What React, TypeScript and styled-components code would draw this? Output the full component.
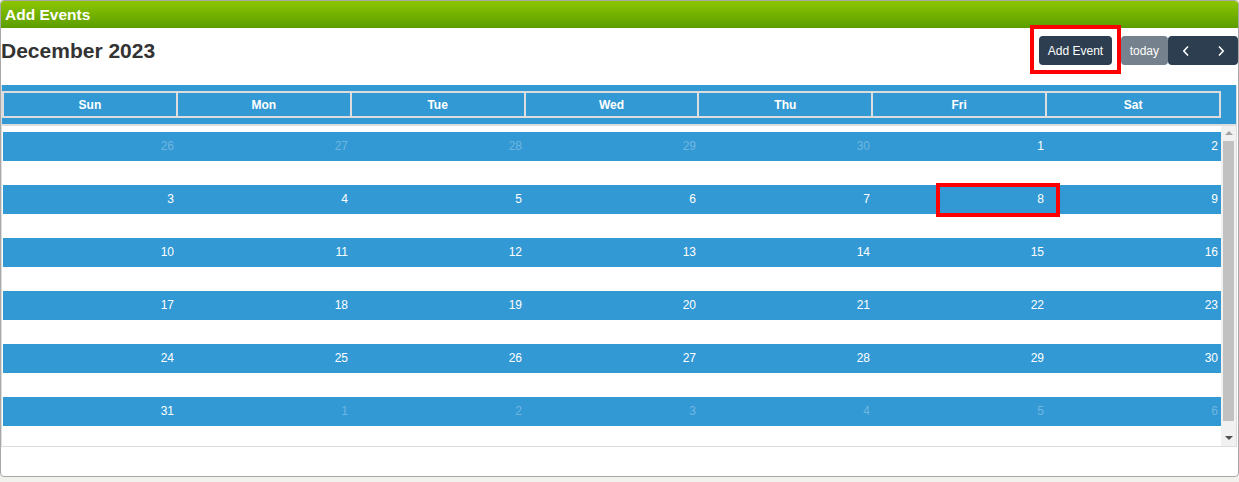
import React, { FC } from "react";
import styled, { createGlobalStyle, css } from "styled-components";

const GlobalStyle = createGlobalStyle`
  html, body {
    margin: 0;
    padding: 0;
    background: #f3f1ed;
    font-family: "Liberation Sans", Arial, sans-serif;
  }
  * {
    box-sizing: border-box;
  }
`;

const BLUE = "#3399d4";
const DARK = "#2c3e50";

const Panel = styled.div`
  width: 1239px;
  height: 477px;
  border: 1px solid #a8a8a8;
  border-radius: 4px;
  background: #fff;
  overflow: hidden;
  display: flex;
  flex-direction: column;
`;

const PanelHeader = styled.div`
  height: 27px;
  padding-left: 4px;
  display: flex;
  align-items: center;
  background: linear-gradient(#8cc600, #5b9d00);
  border-top-right-radius: 3px;
  color: #fff;
  font-size: 15.5px;
  font-weight: bold;
`;

const Toolbar = styled.div`
  height: 57px;
  display: flex;
  justify-content: space-between;
  align-items: flex-start;
`;

const MonthTitle = styled.h2`
  margin: 10px 0 0 0;
  font-size: 21px;
  font-weight: bold;
  color: #333;
  line-height: 25px;
`;

const ButtonRow = styled.div`
  display: flex;
  align-items: center;
  padding-top: 8px;
`;

const Highlighted = styled.div`
  position: relative;
  margin-right: 9px;
`;

const Marker = styled.div<{ $left: number; $top: number; $width: number; $height: number }>`
  position: absolute;
  left: ${(p) => p.$left}px;
  top: ${(p) => p.$top}px;
  width: ${(p) => p.$width}px;
  height: ${(p) => p.$height}px;
  border: 4px solid #ff0000;
  pointer-events: none;
  z-index: 2;
`;

const ToolButton = styled.button<{ $muted?: boolean; $group?: "left" | "right" }>`
  height: 29px;
  border: none;
  background: ${DARK};
  color: #fff;
  font-family: "Liberation Sans", Arial, sans-serif;
  font-size: 12px;
  padding: 0 8.5px;
  border-radius: 4px;
  display: flex;
  align-items: center;
  justify-content: center;
  cursor: pointer;

  ${(p) =>
    p.$muted &&
    css`
      opacity: 0.65;
      padding: 0 9px;
    `}

  ${(p) =>
    p.$group &&
    css`
      width: 35px;
      padding: 0;
      border-radius: ${p.$group === "left" ? "4px 0 0 4px" : "0 4px 4px 0"};
    `}
`;

const CalendarView = styled.div`
  margin-right: 1px;
  border-left: 1px solid #ddd;
  border-right: 1px solid #ddd;
  border-bottom: 1px solid #ddd;
`;

const HeadBand = styled.div`
  background: ${BLUE};
  padding: 6px 15px 6px 0;
  border-bottom: 2px solid #ddd;
`;

const HeadGrid = styled.div`
  display: grid;
  grid-template-columns: repeat(7, 1fr);
  border: 1px solid #ddd;
`;

const HeadCell = styled.div`
  height: 25px;
  border: 1px solid #ddd;
  display: flex;
  align-items: center;
  justify-content: center;
  color: #fff;
  font-size: 12px;
  font-weight: bold;
`;

const BodyFrame = styled.div`
  height: 320px;
  display: flex;
`;

const Weeks = styled.div`
  flex: 1;
  overflow: hidden;
  padding-left: 1px;
`;

const ScrollTrack = styled.div`
  width: 15px;
  background: #f1f1f1;
  display: flex;
  flex-direction: column;
  align-items: center;
`;

const ScrollArrow = styled.div`
  height: 15px;
  width: 15px;
  display: flex;
  align-items: center;
  justify-content: center;
`;

const ScrollThumb = styled.div`
  width: 11px;
  height: 280px;
  background: #c1c1c1;
  margin-bottom: auto;
`;

const WeekRow = styled.div`
  height: 53px;
  padding-top: 6px;
`;

const DayBar = styled.div`
  display: grid;
  grid-template-columns: repeat(7, 1fr);
  height: 29px;
  background: ${BLUE};
`;

const DayCell = styled.div<{ $other?: boolean }>`
  position: relative;
  text-align: right;
  padding-right: 3px;
  line-height: 29px;
  font-size: 12px;
  color: #fff;
  ${(p) =>
    p.$other &&
    css`
      color: rgba(255, 255, 255, 0.3);
    `}
`;

const Chevron: FC<{ dir: "left" | "right" }> = ({ dir }) => (
  <svg width="8" height="12" viewBox="0 0 8 12">
    <polyline
      points={dir === "left" ? "6,1.5 1.8,6 6,10.5" : "2,1.5 6.2,6 2,10.5"}
      fill="none"
      stroke="#fff"
      strokeWidth="1.6"
    />
  </svg>
);

const Triangle: FC<{ up?: boolean }> = ({ up }) => (
  <svg width="8" height="5" viewBox="0 0 8 5">
    <polygon points={up ? "0,4 8,4 4,0" : "0,0 8,0 4,4"} fill={up ? "#a3a3a3" : "#505050"} />
  </svg>
);

const days = ["Sun", "Mon", "Tue", "Wed", "Thu", "Fri", "Sat"];

type Day = { n: number; other?: boolean; mark?: boolean };

const weeks: Day[][] = [
  [26, 27, 28, 29, 30].map((n) => ({ n, other: true } as Day)).concat([{ n: 1 }, { n: 2 }]),
];
for (let start = 3; start <= 24; start += 7) {
  weeks.push(Array.from({ length: 7 }, (_, i) => ({ n: start + i, mark: start + i === 8 })));
}
weeks.push([{ n: 31 }, ...[1, 2, 3, 4, 5, 6].map((n) => ({ n, other: true }))]);

const App: FC = () => {
  return (
    <>
      <GlobalStyle />
      <Panel>
        <PanelHeader>Add Events</PanelHeader>
        <Toolbar>
          <MonthTitle>December 2023</MonthTitle>
          <ButtonRow>
            <Highlighted>
              <Marker $left={-9} $top={-11} $width={91} $height={49} />
              <ToolButton>Add Event</ToolButton>
            </Highlighted>
            <ToolButton $muted>today</ToolButton>
            <ToolButton $group="left">
              <Chevron dir="left" />
            </ToolButton>
            <ToolButton $group="right">
              <Chevron dir="right" />
            </ToolButton>
          </ButtonRow>
        </Toolbar>
        <CalendarView>
          <HeadBand>
            <HeadGrid>
              {days.map((d) => (
                <HeadCell key={d}>{d}</HeadCell>
              ))}
            </HeadGrid>
          </HeadBand>
          <BodyFrame>
            <Weeks>
              {weeks.map((week, wi) => (
                <WeekRow key={wi}>
                  <DayBar>
                    {week.map((day, di) => (
                      <DayCell key={di} $other={day.other}>
                        {day.mark && <Marker $left={63} $top={-2} $width={124} $height={34} />}
                        {day.n}
                      </DayCell>
                    ))}
                  </DayBar>
                </WeekRow>
              ))}
            </Weeks>
            <ScrollTrack>
              <ScrollArrow>
                <Triangle up />
              </ScrollArrow>
              <ScrollThumb />
              <ScrollArrow>
                <Triangle />
              </ScrollArrow>
            </ScrollTrack>
          </BodyFrame>
        </CalendarView>
      </Panel>
    </>
  );
};

export default App;
